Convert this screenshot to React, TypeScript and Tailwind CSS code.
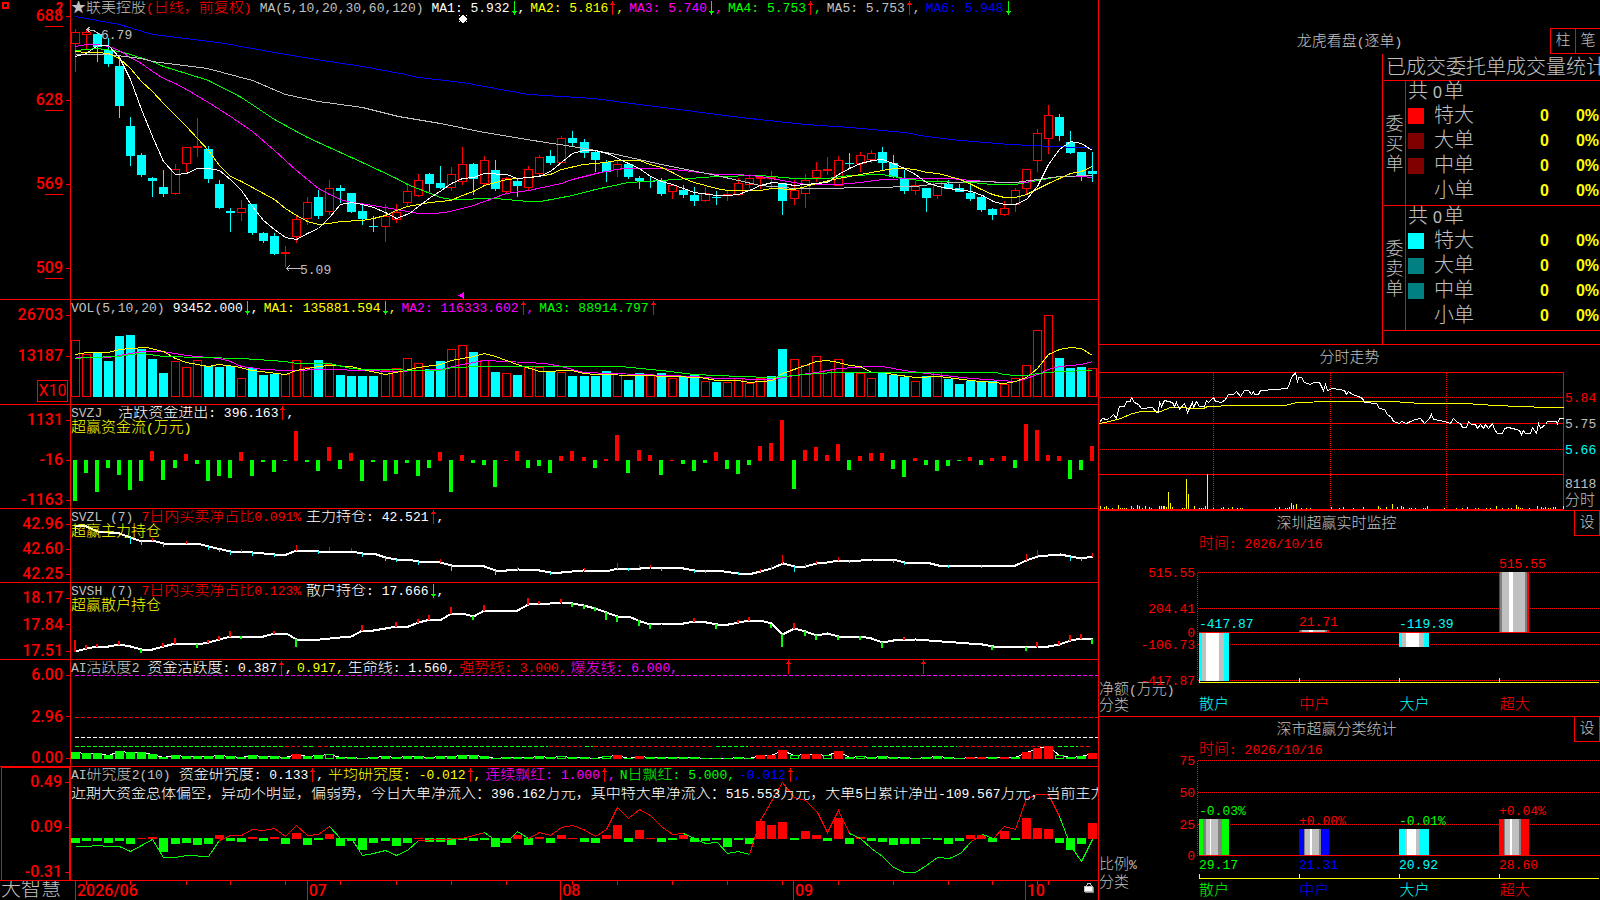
import React from 'react';
import clsx from 'clsx';

type Trend = 'up' | 'down';

interface ReadoutItem {
  text: string;
  color: string;
  trend?: Trend;
  comma?: boolean;
}

const C = {
  red: '#ff0000',
  green: '#00ff00',
  cyan: '#00ffff',
  yellow: '#ffff00',
  magenta: '#ff00ff',
  silver: '#c0c0c0',
  blue: '#0000ff',
  white: '#ffffff',
};

// centre of the bar for trading day i
const barX = (i: number) => Math.floor(75.517 + 11.054 * i);

// high, body top, body bottom, low, rising
const candles: number[][] = [
  [29, 32, 43, 72, 1], [29, 32, 34, 49, 1], [32, 34, 47, 62, 0], [38, 50, 64, 67, 0], [56, 66, 106, 118, 0],
  [117, 126, 156, 166, 0], [153, 155, 175, 177, 0], [177, 178, 181, 197, 0], [170, 187, 194, 197, 0], [164, 169, 193, 195, 1],
  [147, 147, 163, 172, 1], [118, 146, 147, 157, 1], [146, 149, 179, 183, 0], [180, 184, 208, 209, 0], [208, 211, 213, 232, 0],
  [200, 208, 212, 221, 1], [204, 204, 233, 235, 0], [232, 233, 241, 243, 0], [233, 236, 254, 255, 0], [246, 252, 253, 267, 1],
  [215, 219, 236, 243, 1], [197, 202, 218, 225, 1], [190, 197, 216, 219, 0], [180, 188, 211, 215, 1], [185, 188, 191, 203, 0],
  [193, 193, 212, 213, 0], [205, 211, 219, 225, 0], [216, 226, 227, 232, 0], [204, 216, 226, 242, 1], [204, 212, 219, 223, 1],
  [183, 191, 202, 207, 1], [174, 180, 195, 197, 1], [173, 174, 184, 192, 0], [166, 183, 188, 189, 0], [167, 174, 187, 191, 1],
  [147, 164, 181, 185, 1], [163, 164, 179, 195, 0], [156, 160, 183, 185, 1], [160, 170, 189, 191, 0], [177, 178, 191, 194, 1],
  [179, 181, 186, 197, 0], [166, 169, 187, 191, 1], [155, 157, 173, 175, 1], [150, 156, 163, 165, 0], [136, 138, 162, 163, 1],
  [131, 138, 143, 146, 0], [139, 142, 153, 158, 0], [150, 152, 160, 172, 0], [160, 162, 172, 182, 0], [161, 164, 169, 177, 1],
  [163, 164, 177, 179, 0], [176, 178, 181, 189, 0], [176, 181, 182, 188, 0], [178, 180, 194, 196, 0], [185, 185, 191, 199, 1],
  [185, 190, 195, 198, 0], [187, 195, 201, 206, 0], [187, 193, 200, 202, 1], [191, 197, 198, 205, 0], [191, 194, 194, 201, 1],
  [178, 183, 194, 196, 1], [174, 178, 184, 188, 1], [175, 177, 177, 189, 1], [171, 177, 178, 188, 1], [183, 183, 201, 215, 0],
  [180, 190, 198, 205, 1], [174, 180, 193, 208, 1], [162, 170, 177, 182, 1], [157, 169, 170, 175, 1], [156, 160, 185, 185, 1],
  [153, 163, 164, 169, 0], [152, 155, 163, 172, 1], [150, 153, 159, 163, 1], [147, 152, 163, 170, 0], [155, 163, 177, 178, 0],
  [170, 178, 191, 194, 0], [181, 185, 190, 195, 1], [188, 188, 198, 212, 0], [178, 181, 195, 199, 1], [180, 184, 189, 189, 0],
  [184, 188, 192, 192, 0], [185, 193, 199, 201, 0], [195, 197, 210, 212, 0], [208, 209, 215, 220, 0], [201, 208, 214, 216, 1],
  [188, 190, 204, 212, 1], [169, 169, 188, 194, 1], [129, 133, 160, 172, 1], [105, 115, 138, 154, 1], [114, 117, 136, 141, 0],
  [131, 142, 153, 154, 0], [152, 152, 176, 181, 0], [152, 171, 174, 182, 0],
];

const priceLines: [string, string][] = [
  [C.blue, '75,16 97,20 119,24 152,34 218,42 252,48 285,54 329,61 362,66 400,73 418,77 462,82 495,88 528,94 594,98 638,104 694,111 740,117 805,124 850,127 904,132 926,136 960,140 1010,144 1050,146 1080,147 1092,148'],
  [C.green, '75,50 97,48 119,51 130,54 152,61 163,66 186,73 208,80 241,97 274,119 307,137 340,152 362,162 396,178 407,184 440,197 451,199 495,198 528,201 540,201 572,195 595,189 628,182 661,180 716,176 760,175 794,178 827,178 849,175 882,174 904,178 926,181 971,182 992,184 1015,184 1037,180 1059,176 1092,175'],
  [C.magenta, '75,46 86,44 97,44 108,46 119,50 130,57 141,63 152,71 163,78 175,83 186,89 208,102 230,116 252,131 274,150 296,170 318,188 329,194 340,199 351,202 373,205 396,209 418,213 435,213 450,211 473,205 495,197 506,193 528,190 561,183 572,179 600,172 622,168 661,168 683,170 716,174 738,174 760,176 782,180 805,184 838,184 860,182 882,179 915,178 950,178 971,180 1004,182 1026,182 1037,179 1059,176 1081,176 1092,177'],
  [C.silver, '75,54 108,54 141,58 152,61 207,68 252,80 285,94 318,101 362,107 398,116 440,123 484,132 539,141 572,146 595,150 616,154 661,164 716,175 738,180 760,185 794,188 816,188 871,187 915,186 938,183 971,181 1015,182 1037,179 1059,176 1092,175'],
  [C.yellow, '75,51 86,52 97,52 108,53 119,58 130,68 141,81 152,91 163,103 175,115 186,126 197,138 208,150 219,165 230,176 241,181 252,187 263,193 274,199 285,208 296,215 307,221 318,224 329,223 340,221 362,220 373,218 385,215 396,210 407,206 418,204 430,202 450,200 462,195 473,191 484,185 495,182 506,179 517,178 528,177 550,174 561,169 583,164 605,162 616,160 639,160 650,164 661,167 672,172 683,178 694,182 716,188 727,190 760,190 771,188 794,189 816,183 838,178 860,174 871,172 893,168 904,168 915,169 926,172 938,173 949,176 960,179 971,184 981,189 992,194 1004,197 1015,197 1026,194 1048,183 1070,173 1081,171 1092,166'],
  [C.white, '75,56 86,53 97,45 108,45 119,57 130,79 141,109 152,136 163,161 175,174 186,173 197,168 208,168 219,170 230,179 241,190 252,206 263,220 274,229 285,237 296,239 307,233 318,228 329,217 340,204 351,202 362,204 373,207 385,212 396,218 409,213 418,206 430,197 441,190 451,183 462,178 473,177 484,173 506,174 517,178 539,176 550,171 561,162 572,153 583,150 595,150 607,153 628,163 639,168 650,176 661,181 672,184 683,188 694,192 716,195 727,195 738,194 749,190 760,185 772,182 782,183 794,185 805,184 827,182 838,174 849,168 860,163 872,160 882,159 893,163 904,168 915,174 926,182 938,186 948,188 971,191 982,195 993,201 1004,204 1015,204 1026,199 1037,186 1048,164 1059,149 1070,141 1081,143 1092,150'],
];

// top of each volume bar, negative on falling days
const volumes = [
  340, 354, -353, -361, -336, -335, -349, -359, -373, 361, 367, 360, -366, -367, -366, 378, -368, -375, -374, 374,
  360, 367, -360, 364, -375, -376, -376, -376, 370, 368, 358, 363, -369, -361, 349, 345, -352, 360, -372, 373,
  -375, 366, 367, -371, 372, -376, -376, -376, -371, 373, -380, -373, 375, -373, 378, -377, -374, 381, -382, 382,
  378, 383, 378, -376, -349, 359, 365, 356, 370, 359, -373, 373, 378, -373, -375, -377, 381, -376, 372, -379,
  -384, -381, -381, -381, 384, 378, 365, 330, 315, -358, -368, -367, 368,
];

const volumeLines: [string, string][] = [
  [C.magenta, '75,357 108,357 119,355 141,351 163,351 186,355 219,358 230,361 241,366 263,369 285,370 329,369 396,371 440,369 462,364 484,360 506,361 545,363 561,366 583,372 640,374 694,376 716,378 772,379 794,375 816,372 838,368 871,366 882,366 904,370 926,373 971,378 1015,381 1026,378 1037,374 1048,369 1059,366 1081,364 1092,361'],
  [C.yellow, '75,354 86,352 108,352 119,349 130,348 146,347 163,351 175,358 186,362 208,366 218,364 235,366 252,370 285,374 296,370 318,366 329,365 351,366 362,369 385,374 400,371 418,367 440,364 451,360 473,356 484,353 495,356 517,364 539,371 572,370 583,373 595,374 640,375 700,377 716,380 738,380 749,382 772,380 782,373 805,365 816,361 827,360 838,362 849,365 860,366 871,372 882,372 893,374 915,377 938,376 970,380 1004,383 1015,381 1026,377 1037,368 1048,354 1059,349 1070,347 1081,348 1092,355'],
  [C.green, '75,358 86,357 119,356 130,354 141,353 163,356 241,358 285,361 296,363 329,363 351,368 364,369 440,370 451,367 484,366 560,366 620,366 661,370 694,374 740,376 771,377 794,375 816,373 838,372 995,372 1004,374 1015,375 1026,375 1037,373 1059,371 1092,370'],
];

const moneyFlow = [
  -41, -13, -32, -8, -15, -30, -21, 10, -20, -8, 7, -4, -21, -16, -18, 9, -16, -2, -12, -1,
  30, -2, -11, 14, -9, 8, -21, -2, -21, -14, -3, -16, -8, 9, -32, 6, -3, -5, -27, 1,
  10, -8, -6, -13, 5, 10, 4, -8, 2, 26, -13, 11, 6, -15, 1, -4, -11, -3, 9, -9,
  -14, -5, 15, 18, 41, -29, 11, 14, 6, 17, -10, 5, 8, 8, -9, -17, 3, -5, -11, -6,
  -1, 4, -5, 3, 5, -8, 37, 31, 6, 5, -19, -10, 15,
];

const mainHolding =
  '75,525 86,526 97,531 119,533 130,537 141,541 152,540 163,543 197,543 208,546 230,551 252,552 274,554 286,554 296,550 318,551 351,551 362,553 373,553 385,557 396,559 407,559 418,561 440,562 451,565 484,566 495,570 506,570 518,569 539,570 550,572 561,572 583,570 606,571 617,568 640,568 650,567 683,568 694,570 716,570 738,573 752,573 760,571 771,568 783,563 794,566 805,566 816,563 827,562 838,560 849,561 872,559 893,559 904,562 926,562 938,565 1015,565 1026,560 1037,556 1048,555 1060,554 1070,556 1081,558 1092,556';

// bar index, from, to, rising
const mainTicks: number[][] = [
  [0, 525, 530, 0], [5, 537, 543, 0], [6, 541, 544, 0], [7, 538, 540, 1], [8, 543, 546, 0], [10, 541, 543, 1], [12, 546, 549, 0],
  [13, 549, 551, 0], [14, 551, 554, 0], [15, 549, 551, 1], [16, 552, 555, 0], [18, 554, 556, 0], [20, 545, 550, 1], [22, 551, 553, 0],
  [23, 547, 550, 1], [25, 548, 550, 1], [26, 553, 556, 0], [28, 557, 560, 0], [29, 559, 561, 0], [31, 561, 564, 0],
  [33, 559, 562, 1], [34, 565, 570, 0], [38, 570, 574, 0], [40, 567, 569, 1], [43, 572, 574, 0], [46, 568, 570, 1],
  [49, 563, 568, 1], [50, 568, 570, 0], [51, 565, 567, 1], [52, 565, 567, 1], [53, 568, 570, 0], [56, 570, 572, 0],
  [57, 570, 572, 0], [60, 572, 574, 0], [62, 569, 571, 1], [63, 565, 569, 1], [64, 555, 563, 1], [65, 566, 571, 0],
  [66, 563, 566, 1], [67, 561, 563, 1], [69, 557, 560, 1], [70, 560, 562, 0], [74, 560, 562, 0], [75, 562, 564, 0],
  [79, 565, 567, 0], [82, 565, 567, 0], [86, 554, 560, 1], [87, 550, 555, 1], [90, 556, 560, 0], [91, 558, 560, 0],
  [92, 553, 556, 1],
];

const retailHolding =
  '75,651 86,648 97,646 108,646 119,644 130,646 141,649 152,649 163,646 175,643 197,644 208,642 219,639 230,636 263,636 274,633 286,633 296,639 310,640 340,637 351,636 362,630 373,630 385,628 396,626 408,626 418,622 430,619 441,619 451,613 462,613 473,616 484,610 517,610 528,604 550,603 561,602 572,603 583,605 595,608 606,612 617,616 628,616 640,621 650,624 661,623 683,623 694,621 706,622 717,624 728,624 749,620 760,620 771,623 782,634 794,628 805,631 816,635 827,633 838,636 860,636 871,638 882,642 893,640 915,639 982,644 993,646 1015,646 1026,647 1037,646 1048,646 1059,644 1070,640 1081,638 1092,639';

const retailTicks: number[][] = [
  [0, 640, 651, 1], [1, 645, 648, 1], [2, 644, 646, 1], [4, 641, 644, 1], [6, 649, 652, 0], [8, 643, 646, 1], [9, 638, 643, 1],
  [11, 644, 647, 0], [12, 640, 642, 1], [13, 636, 639, 1], [14, 631, 636, 1], [15, 636, 638, 0], [18, 631, 633, 1], [20, 639, 646, 0],
  [26, 625, 630, 1], [29, 622, 626, 1], [31, 619, 622, 1], [32, 615, 619, 1], [34, 607, 613, 1], [36, 616, 619, 0],
  [37, 605, 610, 1], [41, 598, 604, 1], [42, 601, 603, 1], [44, 599, 602, 1], [45, 603, 606, 0], [46, 605, 608, 0],
  [47, 607, 610, 0], [48, 612, 619, 0], [49, 616, 621, 0], [51, 620, 625, 0], [52, 624, 628, 0], [56, 618, 621, 1],
  [58, 624, 628, 0], [60, 620, 622, 1], [61, 617, 620, 1], [63, 624, 627, 0], [64, 634, 646, 0], [65, 623, 628, 1],
  [66, 631, 635, 0], [67, 635, 639, 0], [69, 636, 639, 0], [71, 636, 639, 0], [73, 642, 647, 0], [75, 637, 639, 1],
  [83, 646, 649, 0], [86, 647, 650, 0], [87, 642, 646, 1], [89, 641, 644, 1], [90, 635, 640, 1], [91, 634, 638, 1],
  [92, 639, 643, 0],
];

const activity = [
  752, 753, 753, 755, 751, 752, 752, 754, 757, 755, 756, 756, 756, 755, 756, 757, 755, 756, 756, 757,
  754, 756, 755, 754, 757, 757, 758, 757, 756, 757, 756, 756, 757, 756, 756, 755, 755, 756, 758, 757,
  757, 757, 756, 757, 756, 757, 757, 758, 756, 755, 758, 756, 757, 757, 757, 757, 757, 758, 758, 758,
  757, 758, 755, 755, 750, 755, 754, 754, 755, 751, 757, 756, 757, 756, 757, 757, 758, 757, 756, 757,
  758, 757, 757, 757, 757, 757, 752, 748, 746, 755, 757, 756, 753,
];
const activityHot = [20, 49, 51, 62, 63, 64, 66, 67, 69, 81, 82, 84, 86, 87, 88, 92];
const activityHollow = [23, 44, 48, 65, 68, 71, 89];

// from, to, colour of the average activity line
const activityRuns: [number, number, string][] = [
  [75, 284, C.green], [285, 300, C.red], [303, 315, C.green], [318, 328, C.red], [330, 548, C.green], [549, 582, C.red],
  [585, 593, C.green], [594, 714, C.red], [716, 748, C.green], [750, 870, C.red], [872, 957, C.green], [959, 1054, C.red],
  [1058, 1078, C.green], [1080, 1091, C.red],
];

const research = [
  -5, -3, -3, -5, -3, -6, 1, 2, -14, -6, -5, -7, -6, 4, -3, -4, 2, -3, 2, -6,
  6, -7, -2, 5, -8, -3, -12, -5, -3, -8, -5, 1, -4, -4, -7, -2, -3, -2, -9, -5,
  4, -7, 2, -5, 4, 1, -4, -5, 4, 14, -4, 9, 1, -4, -2, 4, -4, -3, -2, -9,
  -2, -6, 18, 14, 17, -2, 8, 4, -3, 21, -6, 2, -3, -4, -7, -6, -6, -1, -2, -6,
  -3, 4, 4, -4, 8, -2, 21, 11, 10, -5, -12, -6, 16,
];

const researchLines: [string, string][] = [
  [C.green, '75,846 86,846 97,845 108,846 119,846 130,851 141,845 152,839 163,857 175,857 186,855 208,856 219,840'],
  [C.red, '219,840 230,835 241,835 252,829 263,830 274,828 285,836 296,825 307,835 318,834 329,826'],
  [C.green, '329,826 340,838 351,838 362,855 373,853 385,850 396,855 407,850 418,840'],
  [C.red, '418,840 440,839 462,838 473,835 484,832'],
  [C.green, '484,832 495,840 503,842 510,838 517,831 528,838'],
  [C.red, '528,838 539,832 550,835 561,827 572,825 583,829 595,836 606,829 617,807 628,818 639,809 650,815 661,826 672,834 683,833'],
  [C.green, '683,833 694,838 705,843 717,842 727,853 738,851 749,854'],
  [C.red, '749,854 755,835 760,820 782,782 794,797 805,800 817,812 827,832 838,810 849,833'],
  [C.green, '849,833 860,838 871,848 882,856 893,867 904,872 915,872 926,865 937,857 949,858 960,853 971,841'],
  [C.red, '971,841 982,834'],
  [C.green, '982,834 993,838'],
  [C.red, '993,838 1004,826 1015,829 1026,798 1037,794 1048,794 1059,816'],
  [C.green, '1059,816 1070,845 1081,861 1092,839'],
];

const intradayPrice =
  '1099,422 1102,418 1106,419 1109,418 1113,414 1116,418 1119,406 1124,406 1126,401 1130,401 1131,397 1134,402 1138,404 1141,408 1152,407 1156,412 1158,412 1159,401 1161,406 1164,400 1172,402 1174,406 1176,402 1179,409 1184,403 1187,412 1192,402 1193,407 1196,401 1199,406 1204,406 1206,400 1208,402 1213,397 1215,401 1221,402 1225,399 1228,394 1233,394 1236,391 1240,396 1244,390 1248,390 1251,394 1253,391 1254,394 1258,394 1260,390 1275,389 1287,388 1289,383 1291,377 1295,372 1297,382 1298,377 1301,377 1304,382 1310,384 1313,382 1319,382 1321,386 1323,390 1325,384 1327,390 1332,388 1344,390 1346,394 1348,391 1352,394 1358,396 1362,398 1364,402 1376,403 1379,408 1384,409 1387,414 1391,417 1393,421 1399,423 1401,421 1406,423 1410,421 1415,419 1420,418 1424,423 1429,418 1431,414 1433,419 1440,420 1447,422 1450,423 1453,418 1457,422 1460,423 1462,427 1466,427 1468,421 1471,424 1475,424 1477,428 1480,424 1483,428 1485,424 1488,428 1492,423 1494,429 1497,433 1502,433 1504,428 1508,427 1516,429 1519,430 1521,434 1523,430 1525,433 1530,433 1532,427 1534,430 1536,433 1538,423 1540,428 1545,424 1547,421 1556,421 1557,423 1559,418 1563,418';
const intradayAverage =
  '1099,423 1109,421 1120,418 1132,413 1141,411 1160,411 1170,407 1203,408 1207,406 1235,405 1284,405 1297,402 1330,401 1392,401 1420,403 1465,403 1495,405 1520,406 1546,407 1563,407';

const intradayVolume: [number, number][] = [
  [1100, 506], [1104, 507], [1106, 506], [1108, 508], [1112, 508], [1118, 505], [1120, 508], [1122, 508], [1124, 508], [1126, 508],
  [1131, 506], [1133, 508], [1137, 505], [1139, 506], [1142, 508], [1145, 506], [1149, 507], [1151, 508], [1159, 506], [1161, 506],
  [1163, 506], [1164, 506], [1166, 507], [1168, 492], [1170, 503], [1172, 507], [1182, 508], [1184, 508], [1186, 479], [1188, 494],
  [1194, 506], [1199, 508], [1201, 508], [1203, 508], [1205, 506], [1207, 474], [1213, 508], [1221, 508], [1223, 507], [1228, 508],
  [1232, 507], [1237, 508], [1240, 508], [1242, 508], [1275, 508], [1279, 507], [1285, 508], [1287, 508], [1289, 507], [1291, 503],
  [1293, 505], [1296, 504], [1301, 508], [1306, 508], [1310, 508], [1331, 507], [1339, 508], [1343, 507], [1353, 508], [1363, 507],
  [1378, 506], [1380, 508], [1386, 507], [1392, 504], [1397, 507], [1401, 506], [1403, 507], [1409, 508], [1411, 508], [1415, 508],
  [1423, 508], [1425, 508], [1427, 506], [1444, 508], [1456, 508], [1462, 508], [1467, 507], [1475, 508], [1478, 508], [1486, 508],
  [1490, 508], [1496, 506], [1502, 508], [1508, 508], [1511, 508], [1516, 505], [1518, 507], [1520, 508], [1522, 508], [1529, 508],
  [1537, 506], [1541, 507], [1543, 508], [1545, 507], [1548, 508], [1550, 508], [1553, 507], [1555, 507], [1563, 506],
];

const months: [string, string][] = [
  ['2026/06', 'flex-[232]'],
  ['07', 'flex-[254]'],
  ['08', 'flex-[233]'],
  ['09', 'flex-[232]'],
  ['10', 'flex-[72]'],
];
const weekTicks = [86, 130, 186, 230, 285, 340, 396, 451, 506, 572, 617, 672, 727, 782, 838, 893, 948, 992, 1037, 1048];

/* Chinese runs are set one step larger than the figures beside them */
const Mixed: React.FC<{ children: string }> = ({ children }) => (
  <>
    {children.split(/([\u2605\u2e80-\uffef]+)/).map((part, i) =>
      i % 2 ? (
        <span key={i} className="text-[15px]">
          {part}
        </span>
      ) : (
        part
      )
    )}
  </>
);

const TrendArrow: React.FC<{ trend: Trend }> = ({ trend }) => (
  <svg viewBox="0 0 8 14" className="h-[14px] w-2 shrink-0" shapeRendering="crispEdges" fill={trend === 'up' ? C.red : C.green}>
    <rect x="4" y="0" width="1" height="14" />
    {trend === 'up' ? <path d="M4 1h1v1h1v1h1v1H2V3h1V2h1z" /> : <path d="M4 13h1v-1h1v-1h1v-1H2v1h1v1h1z" />}
  </svg>
);

const Readout: React.FC<{ title: React.ReactNode; items: ReadoutItem[]; gap?: string; itemGap?: string }> = ({
  title,
  items,
  gap = 'gap-x-2',
  itemGap = 'gap-x-[5px]',
}) => (
  <div className={clsx('flex overflow-hidden whitespace-pre', gap)}>
    <span className="text-[#c0c0c0]">{title}</span>
    <div className={clsx('flex', itemGap)}>
      {items.map((item) => (
        <span key={item.text} className={clsx('flex', item.color)}>
          <span>
            <Mixed>{item.text}</Mixed>
          </span>
          {item.trend && <TrendArrow trend={item.trend} />}
          {item.comma !== false && ','}
        </span>
      ))}
    </div>
  </div>
);

const Plot: React.FC<{ box: string; children: React.ReactNode }> = ({ box, children }) => (
  <svg
    viewBox={box}
    preserveAspectRatio="none"
    shapeRendering="crispEdges"
    className="col-start-1 row-start-1 block h-full min-h-0 w-full min-w-0"
  >
    {children}
  </svg>
);

const Line: React.FC<{ points: string; color: string; width?: number }> = ({ points, color, width = 1 }) => (
  <polyline points={points} fill="none" stroke={color} strokeWidth={width} transform="translate(0.5 0.5)" />
);

const Box: React.FC<{ x: number; top: number; bottom: number; color: string }> = ({ x, top, bottom, color }) => (
  <rect x={x - 3.5} y={top + 0.5} width="8" height={Math.max(bottom - top, 0.5)} fill="#000" stroke={color} />
);

const AxisLabel: React.FC<{ children: React.ReactNode }> = ({ children }) => (
  <div className="flex h-4 items-center justify-end gap-[3px]">
    <span>{children}</span>
    <span className="h-px w-1 bg-[#f00]" />
  </div>
);

interface PaneProps {
  labels: React.ReactNode[];
  box: string;
  chart: React.ReactNode;
  children: React.ReactNode;
  axisClass?: string;
  axisExtra?: React.ReactNode;
}

const Pane: React.FC<PaneProps> = ({ labels, box, chart, children, axisClass = 'justify-between pt-[7px]', axisExtra }) => (
  <section className="grid min-h-0 grid-cols-[70px_minmax(0,1fr)] border-b border-[#f00]">
    <div className={clsx("relative flex min-h-0 flex-col font-['Roboto','Liberation_Sans',sans-serif] text-base/4 font-medium text-[#f00]", axisClass)}>
      {labels.map((label, i) => (
        <AxisLabel key={i}>{label}</AxisLabel>
      ))}
      {axisExtra}
    </div>
    <div className="relative grid min-h-0 grid-cols-1 grid-rows-1 border-l border-[#f00]">
      <Plot box={box}>{chart}</Plot>
      <div className="z-10 col-start-1 row-start-1 min-w-0 overflow-hidden pt-px">{children}</div>
    </div>
  </section>
);

const priceLabel = (n: string) => (
  <span className="relative">
    {n}
    <span className="absolute right-0 -bottom-[2px] h-px w-[18px] bg-[#f00]" />
  </span>
);

const HoldingTicks: React.FC<{ ticks: number[][]; down: string; width: number }> = ({ ticks, down, width }) => (
  <>
    {ticks.map(([i, from, to, up]) => (
      <rect key={i} x={barX(i) - width + 1} y={from} width={width} height={to - from + 1} fill={up ? C.red : down} />
    ))}
  </>
);

const PricePane = () => (
  <Pane
    box="71 0 1027 299"
    labels={['688', '628', '569', '509'].map(priceLabel)}
    axisClass="justify-between pt-2 pb-[23px]"
    axisExtra={
      <>
        <span className="absolute top-[2px] left-[2px] size-[7px] border-2 border-[#f00]" />
        <span className="absolute top-0 left-14 text-sm/4 font-bold">?</span>
      </>
    }
    chart={
      <>
        {candles.map(([high, top, bottom, low, up], i) => (
          <g key={i}>
            <rect x={barX(i)} y={high} width="1" height={low - high} fill={up ? C.red : C.cyan} />
            {up ? (
              <Box x={barX(i)} top={top} bottom={bottom} color={C.red} />
            ) : (
              <rect x={barX(i) - 4} y={top} width="9" height={bottom - top} fill={C.cyan} />
            )}
          </g>
        ))}
        {priceLines.map(([color, points]) => (
          <Line key={color} color={color} points={points} />
        ))}
        <Line color={C.silver} points="90,26 86,29 90,32" />
        <Line color={C.silver} points="86,29 93,30 102,35" />
        <Line color={C.silver} points="289,265 286,268 289,271" />
        <Line color={C.silver} points="286,268 300,268" />
        <path
          d="M461 16h4v1h1v4h-1v1h-4v-1h-1v-4h1zM459 15h1v1h-1zM462 15h2v1h-2zM466 15h1v1h-1zM459 18h1v2h-1zM466 18h1v2h-1zM459 22h1v-1h-1zM466 22h1v-1h-1zM462 22h2v1h-2z"
          fill={C.white}
        />
        <path d="M464 292v7h-1v-1h-1v-1h-2v-1h-2v-1h2v-1h2v-1h1v-1z" fill={C.magenta} />
      </>
    }
  >
    <Readout
      title={
        <>
          <Mixed>★联美控股</Mixed>
          <span className="mr-2 text-[#f00]">
            <Mixed>(日线，前复权)</Mixed>
          </span>
          MA(5,10,20,30,60,120)
        </>
      }
      items={[
        { text: 'MA1: 5.932', color: 'text-white', trend: 'down' },
        { text: 'MA2: 5.816', color: 'text-[#ff0]', trend: 'up' },
        { text: 'MA3: 5.740', color: 'text-[#f0f]', trend: 'down' },
        { text: 'MA4: 5.753', color: 'text-[#0f0]', trend: 'up' },
        { text: 'MA5: 5.753', color: 'text-[#c0c0c0]', trend: 'up' },
        { text: 'MA6: 5.948', color: 'text-[#00f]', trend: 'down', comma: false },
      ]}
    />
    <span className="absolute top-[28px] left-[30px] text-[#c0c0c0]">6.79</span>
    <span className="absolute top-[88%] left-[229px] text-[#c0c0c0]">5.09</span>
  </Pane>
);

const VolumePane = () => (
  <Pane
    box="71 300 1027 104"
    labels={['26703', '13187']}
    axisClass="gap-[25px] pt-[7px]"
    axisExtra={
      <span className="absolute right-[2px] bottom-[2px] w-[31px] border border-[#f00] text-center text-base/5 font-normal">X10</span>
    }
    chart={
      <>
        {volumes.map((v, i) =>
          v > 0 ? (
            <Box key={i} x={barX(i)} top={v} bottom={396} color={C.red} />
          ) : (
            <rect key={i} x={barX(i) - 4} y={-v} width="9" height={397 + v} fill={C.cyan} />
          )
        )}
        {volumeLines.map(([color, points]) => (
          <Line key={color} color={color} points={points} />
        ))}
      </>
    }
  >
    <Readout
      title="VOL(5,10,20)"
      items={[
        { text: '93452.000', color: 'text-white', trend: 'down' },
        { text: 'MA1: 135881.594', color: 'text-[#ff0]', trend: 'down' },
        { text: 'MA2: 116333.602', color: 'text-[#f0f]', trend: 'up' },
        { text: 'MA3: 88914.797', color: 'text-[#0f0]', trend: 'up', comma: false },
      ]}
    />
  </Pane>
);

const FlowPane = () => (
  <Pane
    box="71 405 1027 103"
    labels={['1131', '-16', '-1163']}
    chart={moneyFlow.map((v, i) => (
      <rect key={i} x={barX(i) - 2} y={v > 0 ? 461 - v : 460} width="4" height={Math.abs(v)} fill={v > 0 ? C.red : C.green} />
    ))}
  >
    <Readout title="SVZJ" gap="gap-x-4" items={[{ text: '活跃资金进出: 396.163', color: 'text-white', trend: 'up' }]} />
    <p className="text-[#ff0]">
      <Mixed>超赢资金流(万元)</Mixed>
    </p>
  </Pane>
);

interface HoldingPaneProps {
  box: string;
  labels: string[];
  code: string;
  ratio: string;
  item: ReadoutItem;
  caption: string;
  chart: React.ReactNode;
}

const HoldingPane: React.FC<HoldingPaneProps> = ({ box, labels, code, ratio, item, caption, chart }) => (
  <Pane box={box} labels={labels} chart={chart}>
    <Readout
      title={
        <>
          {code} (7)
          <span className="ml-2 text-[#f00]">
            <Mixed>{ratio}</Mixed>
          </span>
        </>
      }
      gap="gap-x-[5px]"
      items={[item]}
    />
    <p className="text-[#ff0]">
      <Mixed>{caption}</Mixed>
    </p>
  </Pane>
);

const Dashes: React.FC<{ y: number; color: string; from?: number; to?: number }> = ({ y, color, from = 75, to = 1098 }) => (
  <line x1={from} x2={to} y1={y + 0.5} y2={y + 0.5} stroke={color} strokeDasharray="4 2" />
);

const ActivityPane = () => (
  <Pane
    box="71 660 1027 106"
    labels={['6.00', '2.96', '0.00']}
    chart={
      <>
        <Dashes y={675} color={C.magenta} />
        <Dashes y={717} color={C.red} />
        <Dashes y={737} color={C.white} />
        {activityRuns.map(([from, to, color]) => (
          <Dashes key={from} y={746} from={from} to={to} color={color} />
        ))}
        <Line color={C.white} points={activity.map((v, i) => `${barX(i)},${v}`).join(' ')} />
        {activity.map((v, i) =>
          activityHollow.includes(i) ? (
            <Box key={i} x={barX(i)} top={v} bottom={758} color={C.green} />
          ) : (
            <rect
              key={i}
              x={barX(i) - 4}
              y={v}
              width="9"
              height={759 - v}
              fill={activityHot.includes(i) ? C.red : C.green}
            />
          )
        )}
        <path d="M788 660h1v14h-1zM787 662h3v1h1v1h-5v-1h1zM923 660h1v14h-1zM922 662h3v1h1v1h-5v-1h1z" fill={C.red} />
      </>
    }
  >
    <Readout
      title={<Mixed>AI活跃度2</Mixed>}
      itemGap="gap-x-1"
      items={[
        { text: '资金活跃度: 0.387', color: 'text-white', trend: 'up' },
        { text: '0.917', color: 'text-[#ff0]' },
        { text: '生命线: 1.560', color: 'text-white' },
        { text: '强势线: 3.000', color: 'text-[#f00]' },
        { text: '爆发线: 6.000', color: 'text-[#f0f]' },
      ]}
    />
  </Pane>
);

const ResearchPane = () => (
  <Pane
    box="71 767 1027 113"
    labels={['0.49', '0.09', '-0.31']}
    axisClass="ml-px justify-between border border-b-0 border-[#f00] pt-[6px]"
    chart={
      <>
        {research.map((v, i) => (
          <rect key={i} x={barX(i) - 4} y={v > 0 ? 839 - v : 838} width="9" height={Math.abs(v)} fill={v > 0 ? C.red : C.green} />
        ))}
        {researchLines.map(([color, points]) => (
          <Line key={points} color={color} points={points} />
        ))}
      </>
    }
  >
    <Readout
      title={<Mixed>AI研究度2(10)</Mixed>}
      itemGap="gap-x-1"
      items={[
        { text: '资金研究度: 0.133', color: 'text-white', trend: 'up' },
        { text: '平均研究度: -0.012', color: 'text-[#ff0]', trend: 'up' },
        { text: '连续飘红: 1.000', color: 'text-[#f0f]', trend: 'up' },
        { text: 'N日飘红: 5.000', color: 'text-[#0f0]' },
        { text: '-0.012', color: 'text-[#00f]', trend: 'up' },
      ]}
    />
    <p className="mt-1 overflow-hidden whitespace-nowrap text-white">
      <Mixed>近期大资金总体偏空，异动不明显，偏弱势，今日大单净流入：396.162万元，其中特大单净流入：515.553万元，大单5日累计净出-109.567万元，当前主力</Mixed>
    </p>
  </Pane>
);

const DateAxis = () => (
  <div className="grid min-h-0 grid-cols-[75px_minmax(0,1fr)] overflow-hidden">
    <span className="pl-px text-[20px]/5 whitespace-nowrap text-[#c0c0c0]">大智慧</span>
    <div className="relative grid grid-cols-1 grid-rows-1">
      <Plot box="75 881 1023 19">
        {weekTicks.map((x) => (
          <rect key={x} x={x} y="881" width="1" height="4" fill={C.red} />
        ))}
      </Plot>
      <div className="col-start-1 row-start-1 flex font-['Roboto','Liberation_Sans',sans-serif] text-base/[19px] font-medium text-[#f00]">
        {months.map(([month, grow]) => (
          <span key={month} className={clsx('border-l border-[#f00] pl-px', grow)}>
            {month}
          </span>
        ))}
      </div>
      <svg viewBox="0 0 10 11" shapeRendering="crispEdges" className="absolute top-px right-1 h-[11px] w-[10px]">
        <path d="M2 5V3h1V1h4v2h1v2H7V3H6V2H4v1H3v2z" fill={C.silver} />
        <rect x="1" y="5" width="9" height="6" fill="#808080" />
        <rect x="0" y="4" width="9" height="6" fill={C.silver} />
        <rect x="1" y="5" width="7" height="4" fill={C.white} />
      </svg>
    </div>
  </div>
);

interface OrderSide {
  side: string;
  swatches: string[];
}

const orderSides: OrderSide[] = [
  { side: '委买单', swatches: ['bg-[#f00]', 'bg-[#800000]', 'bg-[#800000]', ''] },
  { side: '委卖单', swatches: ['bg-[#0ff]', 'bg-[#008080]', 'bg-[#008080]', ''] },
];
const orderSizes = ['特大', '大单', '中单', '小单'];

const OrderPanel = () => (
  <section className="flex min-h-0 flex-col border-b border-[#f00] text-[#c0c0c0]">
    <header className="relative flex h-[54px] shrink-0 items-end justify-center">
      <h2 className="h-[19px]">
        <Mixed>龙虎看盘(逐单)</Mixed>
      </h2>
      <div className="absolute right-0 bottom-0 flex border border-r-0 border-[#f00]">
        <button className="h-6 w-[25px] border-r border-[#f00] text-[15px]">柱</button>
        <button className="h-6 w-6 text-[15px]">笔</button>
      </div>
    </header>
    <div className="flex w-[218px] flex-1 flex-col self-end overflow-hidden border-l border-[#f00] text-[20px]/5">
      <div className="ml-px h-[27px] shrink-0 overflow-hidden border-b border-[#f00] pt-[5px] pl-[2px] whitespace-nowrap">
        已成交委托单成交量统计
      </div>
      {orderSides.map(({ side, swatches }) => (
        <div key={side} className="ml-px flex h-[125px] border-b border-[#f00]">
          <div className="flex w-[22px] shrink-0 flex-col items-center justify-center border-r border-[#f00] pt-[3px] text-[18px]/5">
            {side.split('').map((char) => (
              <span key={char}>{char}</span>
            ))}
          </div>
          <table className="h-[122px] w-full table-fixed">
            <colgroup>
              <col className="w-7" />
              <col className="w-12" />
              <col className="w-[68px]" />
              <col />
            </colgroup>
            <tbody>
              <tr className="h-[22px]">
                <td colSpan={4} className="pt-[2px] pl-[2px]">
                  共<b className="mr-[2px] ml-[5px] font-['Liberation_Sans',sans-serif] text-base/5">0</b>单
                </td>
              </tr>
              {orderSizes.map((size, i) => (
                <tr key={size} className="h-[25px]">
                  <td className="pl-[2px]">
                    <span className={clsx('block size-4', swatches[i])} />
                  </td>
                  <td className="pt-[3px]">{size}</td>
                  <td className="pr-px text-right font-['Liberation_Sans',sans-serif] text-base/5 font-bold text-[#ff0]">0</td>
                  <td className="pr-px text-right font-['Liberation_Sans',sans-serif] text-base/5 font-bold text-[#ff0]">0%</td>
                </tr>
              ))}
            </tbody>
          </table>
        </div>
      ))}
    </div>
  </section>
);

const dotted = { stroke: C.red, strokeDasharray: '1 1' };

const IntradayPanel = () => (
  <section className="flex min-h-0 flex-col border-b border-[#f00] text-[#c0c0c0]">
    <h2 className="h-[27px] shrink-0 pt-[6px] text-center text-[15px]">分时走势</h2>
    <div className="flex min-h-0 flex-1">
      <div className="grid min-w-0 flex-1 grid-cols-1 grid-rows-1">
        <Plot box="1099 372 465 138">
          <path d="M1099 372.5H1563.5V510M1099 423.5H1563M1099 474.5H1563M1099 509.5H1564" fill="none" stroke={C.red} />
          <path d="M1100 397.5H1563M1100 449.5H1563M1213.5 373V509M1330.5 373V509M1446.5 373V509" fill="none" {...dotted} />
          {intradayVolume.map(([x, top]) => (
            <rect key={x} x={x} y={top} width="1" height={509 - top} fill={C.yellow} />
          ))}
          <Line color={C.yellow} points={intradayAverage} />
          <Line color={C.white} points={intradayPrice} />
        </Plot>
      </div>
      <div className="flex w-9 flex-col gap-[11px] pt-[19px] pl-px">
        <span className="text-[#f00]">5.84</span>
        <span>5.75</span>
        <span className="text-[#0ff]">5.66</span>
        <div className="mt-2 flex flex-col gap-[2px]">
          <span>8118</span>
          <span>
            <Mixed>分时</Mixed>
          </span>
        </div>
      </div>
    </div>
  </section>
);

interface Column {
  name: string;
  label: string;
  color: string;
  fill: string;
  labelY: number;
  top: number;
  bottom: number;
  // start offset and colour of each vertical band of the bar
  bands: [number, string][];
  below?: string;
}

interface ColumnPanelProps {
  title: string;
  unit: string;
  top: number;
  height: number;
  ticks: [string, number][];
  columns: Column[];
  baseline: number;
  axis: number;
  nameClass: string;
  unitClass: string;
  labelColors?: string[];
}

const grey = '#808080';

const ColumnPanel: React.FC<ColumnPanelProps> = (props) => {
  const { title, unit, top, height, ticks, columns, baseline, axis, nameClass, unitClass, labelColors } = props;
  const bodyTop = (y: number) => `calc(${((y - top) / height) * 100}% - 7px)`;
  const left = (i: number) => `${((2 + i * 100) / 403) * 100}%`;

  return (
    <section className="flex min-h-0 flex-col text-[#c0c0c0]">
      <header className="flex h-[25px] shrink-0">
        <h2 className="flex-1 pt-[6px] text-center text-[15px]">{title}</h2>
        <button className="w-[26px] border border-t-0 border-[#f00] text-[15px]">设</button>
      </header>
      <p className="h-4 shrink-0 pt-px pl-[100px] text-[#f00]">
        <Mixed>时间: 2026/10/16</Mixed>
      </p>
      <div className="grid min-h-0 flex-1 grid-cols-[98px_minmax(0,1fr)]">
        <div className={clsx('flex flex-col justify-end leading-4 whitespace-nowrap', unitClass)}>
          <span>
            <Mixed>{unit}</Mixed>
          </span>
          <span>
            <Mixed>分类</Mixed>
          </span>
        </div>
        <div className="flex min-h-0 flex-col">
          <div className="relative grid min-h-0 flex-1 grid-cols-1 grid-rows-1">
            <Plot box={`1197 ${top} 403 ${height}`}>
              {ticks
                .filter(([name]) => name !== '0')
                .map(([name, y]) => (
                  <path key={name} d={`M1198 ${y - 0.5}H1600`} {...dotted} />
                ))}
              <path d={`M1197.5 ${ticks[0][1]}V${ticks[ticks.length - 1][1]}`} {...dotted} />
              {columns.map((column, i) => (
                <g key={column.name}>
                  <rect x={1199 + i * 100} y={column.top} width="30" height={column.bottom - column.top} fill={column.fill} />
                  {column.bands.map(([from, color], n) => (
                    <rect
                      key={from}
                      x={1199 + i * 100 + from}
                      y={column.top}
                      width={(column.bands[n + 1]?.[0] ?? 30) - from}
                      height={column.bottom - column.top}
                      fill={color}
                    />
                  ))}
                  <rect x={1199 + i * 100} y={axis - 4} width="1" height="4" fill={C.yellow} />
                </g>
              ))}
              <rect x="1199" y={baseline} width="401" height="1" fill={C.red} />
              <rect x="1199" y={axis} width="400" height="1" fill={C.yellow} />
            </Plot>
            {ticks.map(([name, y]) => (
              <span key={name} className="absolute right-full mr-[2px] leading-4 text-[#f00]" style={{ top: bodyTop(y) }}>
                {name}
              </span>
            ))}
            {columns.map((column, i) => (
              <React.Fragment key={column.name}>
                <span
                  className={clsx('absolute leading-4', labelColors ? labelColors[i] : column.color)}
                  style={{ top: bodyTop(column.labelY), left: left(i) }}
                >
                  {column.label}
                </span>
                {column.below && (
                  <span className={clsx('absolute leading-4', column.color)} style={{ top: bodyTop(baseline + 10), left: left(i) }}>
                    {column.below}
                  </span>
                )}
              </React.Fragment>
            ))}
          </div>
          <div className={clsx('grid shrink-0 grid-cols-4 pt-px pl-[2px] text-[15px]/4', nameClass)}>
            {columns.map((column) => (
              <span key={column.name} className={column.color}>
                {column.name}
              </span>
            ))}
          </div>
        </div>
      </div>
    </section>
  );
};

const cyanBands: [number, string][] = [[3, C.silver], [7, C.white], [20, C.silver], [25, C.cyan]];
const redBands: [number, string][] = [[1, grey], [3, C.silver], [10, C.white], [14, C.silver], [26, grey], [28, C.red]];

const monitorColumns: Column[] = [
  { name: '散户', label: '-417.87', color: 'text-[#0ff]', fill: C.cyan, labelY: 624, top: 633, bottom: 681, bands: cyanBands },
  { name: '中户', label: '21.71', color: 'text-[#f00]', fill: C.red, labelY: 622, top: 630, bottom: 632, bands: redBands },
  { name: '大户', label: '-119.39', color: 'text-[#0ff]', fill: C.cyan, labelY: 624, top: 633, bottom: 647, bands: cyanBands },
  { name: '超大', label: '515.55', color: 'text-[#f00]', fill: C.red, labelY: 564, top: 572, bottom: 632, bands: redBands },
];

const shareColumns: Column[] = [
  {
    name: '散户', label: '-0.03%', below: '29.17', color: 'text-[#0f0]', fill: C.green, labelY: 811, top: 819, bottom: 855,
    bands: [[4, grey], [7, C.silver], [11, C.white], [12, C.silver], [19, grey], [23, C.green]],
  },
  {
    name: '中户', label: '+0.00%', below: '21.31', color: 'text-[#00f]', fill: C.blue, labelY: 821, top: 829, bottom: 855,
    bands: [[5, grey], [6, C.silver], [11, C.white], [13, C.silver], [20, grey], [22, C.blue]],
  },
  {
    name: '大户', label: '-0.01%', below: '20.92', color: 'text-[#0ff]', fill: C.cyan, labelY: 821, top: 829, bottom: 855,
    bands: [[6, C.silver], [8, C.white], [17, C.silver], [20, C.cyan]],
  },
  {
    name: '超大', label: '+0.04%', below: '28.60', color: 'text-[#f00]', fill: C.red, labelY: 811, top: 819, bottom: 855,
    bands: [[5, grey], [6, C.silver], [11, C.white], [13, C.silver], [20, grey], [22, C.red]],
  },
];

export default function App() {
  return (
    <main className="grid h-screen min-h-[720px] grid-cols-[minmax(0,1fr)_501px] overflow-hidden bg-black font-['Liberation_Mono','Noto_Sans_CJK_SC',monospace] text-[13px]/[15px] font-light">
      <div className="grid min-h-0 min-w-0 grid-rows-[300fr_105fr_104fr_74fr_77fr_107fr_114fr_19fr] border-r border-[#f00]">
        <PricePane />
        <VolumePane />
        <FlowPane />
        <HoldingPane
          box="71 509 1027 73"
          labels={['42.96', '42.60', '42.25']}
          code="SVZL"
          ratio="7日内买卖净占比0.091%"
          item={{ text: '主力持仓: 42.521', color: 'text-white', trend: 'up' }}
          caption="超赢主力持仓"
          chart={
            <>
              <Line points={mainHolding} color={C.white} width={2} />
              <HoldingTicks ticks={mainTicks} down={C.cyan} width={1} />
            </>
          }
        />
        <HoldingPane
          box="71 583 1027 76"
          labels={['18.17', '17.84', '17.51']}
          code="SVSH"
          ratio="7日内买卖净占比0.123%"
          item={{ text: '散户持仓: 17.666', color: 'text-white', trend: 'down' }}
          caption="超赢散户持仓"
          chart={
            <>
              <Line points={retailHolding} color={C.white} width={2} />
              <HoldingTicks ticks={retailTicks} down={C.green} width={2} />
            </>
          }
        />
        <ActivityPane />
        <ResearchPane />
        <DateAxis />
      </div>

      <aside className="grid min-h-0 min-w-0 grid-rows-[345fr_166fr_206fr_183fr]">
        <OrderPanel />
        <IntradayPanel />
        <div className="grid min-h-0 grid-rows-1 border-b border-[#f00]">
          <ColumnPanel
            title="深圳超赢实时监控"
            unit="净额(万元)"
            top={552}
            height={145}
            ticks={[['515.55', 573], ['204.41', 609], ['0', 633], ['-106.73', 645], ['-417.87', 681]]}
            columns={monitorColumns}
            baseline={632}
            axis={682}
            nameClass="h-[19px]"
            unitClass="pb-px"
          />
        </div>
        <ColumnPanel
          title="深市超赢分类统计"
          unit="比例%"
          top={758}
          height={125}
          ticks={[['75', 761], ['50', 793], ['25', 825], ['0', 856]]}
          columns={shareColumns}
          baseline={855}
          axis={878}
          nameClass="h-[17px]"
          unitClass="gap-[2px] pb-2"
          labelColors={['text-[#0f0]', 'text-[#f00]', 'text-[#0f0]', 'text-[#f00]']}
        />
      </aside>
    </main>
  );
}
